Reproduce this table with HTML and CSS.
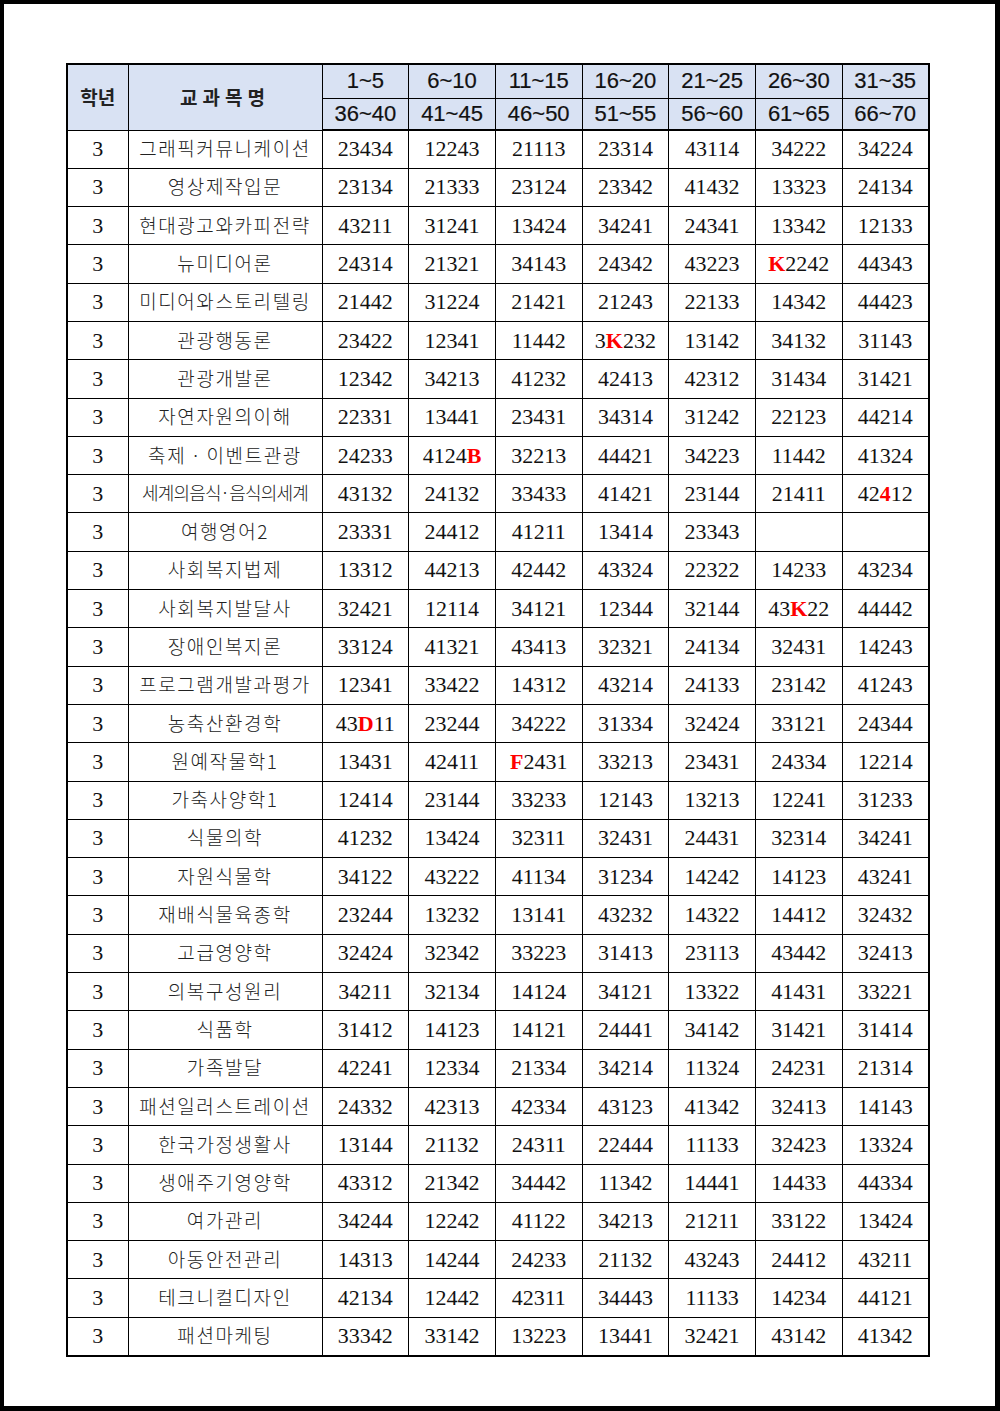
FILE: index.html
```html
<!DOCTYPE html>
<html lang="ko">
<head>
<meta charset="utf-8">
<title>교과목 답안표</title>
<link rel="stylesheet" href="styles.css">
</head>
<body>
<div class="frame">
<table class="sheet">
<colgroup>
<col class="c-grade"><col class="c-name">
<col class="c-num"><col class="c-num"><col class="c-num"><col class="c-num"><col class="c-num"><col class="c-num"><col class="c-num">
</colgroup>
<thead>
<tr class="h1">
<th rowspan="2" class="hk">학년</th>
<th rowspan="2" class="hk wide">교과목명</th>
<th>1~5</th><th>6~10</th><th>11~15</th><th>16~20</th><th>21~25</th><th>26~30</th><th>31~35</th>
</tr>
<tr class="h2">
<th>36~40</th><th>41~45</th><th>46~50</th><th>51~55</th><th>56~60</th><th>61~65</th><th>66~70</th>
</tr>
</thead>
<tbody>
<tr><td>3</td><td class="nm">그래픽커뮤니케이션</td><td>23434</td><td>12243</td><td>21113</td><td>23314</td><td>43114</td><td>34222</td><td>34224</td></tr>
<tr><td>3</td><td class="nm">영상제작입문</td><td>23134</td><td>21333</td><td>23124</td><td>23342</td><td>41432</td><td>13323</td><td>24134</td></tr>
<tr><td>3</td><td class="nm">현대광고와카피전략</td><td>43211</td><td>31241</td><td>13424</td><td>34241</td><td>24341</td><td>13342</td><td>12133</td></tr>
<tr><td>3</td><td class="nm">뉴미디어론</td><td>24314</td><td>21321</td><td>34143</td><td>24342</td><td>43223</td><td><b class="r">K</b>2242</td><td>44343</td></tr>
<tr><td>3</td><td class="nm">미디어와스토리텔링</td><td>21442</td><td>31224</td><td>21421</td><td>21243</td><td>22133</td><td>14342</td><td>44423</td></tr>
<tr><td>3</td><td class="nm">관광행동론</td><td>23422</td><td>12341</td><td>11442</td><td>3<b class="r">K</b>232</td><td>13142</td><td>34132</td><td>31143</td></tr>
<tr><td>3</td><td class="nm">관광개발론</td><td>12342</td><td>34213</td><td>41232</td><td>42413</td><td>42312</td><td>31434</td><td>31421</td></tr>
<tr><td>3</td><td class="nm">자연자원의이해</td><td>22331</td><td>13441</td><td>23431</td><td>34314</td><td>31242</td><td>22123</td><td>44214</td></tr>
<tr><td>3</td><td class="nm">축제 · 이벤트관광</td><td>24233</td><td>4124<b class="r">B</b></td><td>32213</td><td>44421</td><td>34223</td><td>11442</td><td>41324</td></tr>
<tr><td>3</td><td class="nm tight">세계의음식<span class="dot">·</span>음식의세계</td><td>43132</td><td>24132</td><td>33433</td><td>41421</td><td>23144</td><td>21411</td><td>42<b class="r">4</b>12</td></tr>
<tr><td>3</td><td class="nm">여행영어2</td><td>23331</td><td>24412</td><td>41211</td><td>13414</td><td>23343</td><td></td><td></td></tr>
<tr><td>3</td><td class="nm">사회복지법제</td><td>13312</td><td>44213</td><td>42442</td><td>43324</td><td>22322</td><td>14233</td><td>43234</td></tr>
<tr><td>3</td><td class="nm">사회복지발달사</td><td>32421</td><td>12114</td><td>34121</td><td>12344</td><td>32144</td><td>43<b class="r">K</b>22</td><td>44442</td></tr>
<tr><td>3</td><td class="nm">장애인복지론</td><td>33124</td><td>41321</td><td>43413</td><td>32321</td><td>24134</td><td>32431</td><td>14243</td></tr>
<tr><td>3</td><td class="nm">프로그램개발과평가</td><td>12341</td><td>33422</td><td>14312</td><td>43214</td><td>24133</td><td>23142</td><td>41243</td></tr>
<tr><td>3</td><td class="nm">농축산환경학</td><td>43<b class="r">D</b>11</td><td>23244</td><td>34222</td><td>31334</td><td>32424</td><td>33121</td><td>24344</td></tr>
<tr><td>3</td><td class="nm">원예작물학1</td><td>13431</td><td>42411</td><td><b class="r">F</b>2431</td><td>33213</td><td>23431</td><td>24334</td><td>12214</td></tr>
<tr><td>3</td><td class="nm">가축사양학1</td><td>12414</td><td>23144</td><td>33233</td><td>12143</td><td>13213</td><td>12241</td><td>31233</td></tr>
<tr><td>3</td><td class="nm">식물의학</td><td>41232</td><td>13424</td><td>32311</td><td>32431</td><td>24431</td><td>32314</td><td>34241</td></tr>
<tr><td>3</td><td class="nm">자원식물학</td><td>34122</td><td>43222</td><td>41134</td><td>31234</td><td>14242</td><td>14123</td><td>43241</td></tr>
<tr><td>3</td><td class="nm">재배식물육종학</td><td>23244</td><td>13232</td><td>13141</td><td>43232</td><td>14322</td><td>14412</td><td>32432</td></tr>
<tr><td>3</td><td class="nm">고급영양학</td><td>32424</td><td>32342</td><td>33223</td><td>31413</td><td>23113</td><td>43442</td><td>32413</td></tr>
<tr><td>3</td><td class="nm">의복구성원리</td><td>34211</td><td>32134</td><td>14124</td><td>34121</td><td>13322</td><td>41431</td><td>33221</td></tr>
<tr><td>3</td><td class="nm">식품학</td><td>31412</td><td>14123</td><td>14121</td><td>24441</td><td>34142</td><td>31421</td><td>31414</td></tr>
<tr><td>3</td><td class="nm">가족발달</td><td>42241</td><td>12334</td><td>21334</td><td>34214</td><td>11324</td><td>24231</td><td>21314</td></tr>
<tr><td>3</td><td class="nm">패션일러스트레이션</td><td>24332</td><td>42313</td><td>42334</td><td>43123</td><td>41342</td><td>32413</td><td>14143</td></tr>
<tr><td>3</td><td class="nm">한국가정생활사</td><td>13144</td><td>21132</td><td>24311</td><td>22444</td><td>11133</td><td>32423</td><td>13324</td></tr>
<tr><td>3</td><td class="nm">생애주기영양학</td><td>43312</td><td>21342</td><td>34442</td><td>11342</td><td>14441</td><td>14433</td><td>44334</td></tr>
<tr><td>3</td><td class="nm">여가관리</td><td>34244</td><td>12242</td><td>41122</td><td>34213</td><td>21211</td><td>33122</td><td>13424</td></tr>
<tr><td>3</td><td class="nm">아동안전관리</td><td>14313</td><td>14244</td><td>24233</td><td>21132</td><td>43243</td><td>24412</td><td>43211</td></tr>
<tr><td>3</td><td class="nm">테크니컬디자인</td><td>42134</td><td>12442</td><td>42311</td><td>34443</td><td>11133</td><td>14234</td><td>44121</td></tr>
<tr><td>3</td><td class="nm">패션마케팅</td><td>33342</td><td>33142</td><td>13223</td><td>13441</td><td>32421</td><td>43142</td><td>41342</td></tr>
</tbody>
</table>
</div>
</body>
</html>
```
FILE: styles.css
```css
html, body {
  margin: 0;
  padding: 0;
  background: #ffffff;
}
.frame {
  box-sizing: border-box;
  width: 1000px;
  height: 1411px;
  border-style: solid;
  border-color: #000;
  border-width: 4px 5px 5px 4px;
  padding: 59px 0 0 62px;
  background: #fff;
}
.sheet {
  border-collapse: collapse;
  table-layout: fixed;
  width: 862px;
  border: 2px solid #000;
  color: #111;
}
.c-grade { width: 61px; }
.c-name { width: 194px; }
.c-num { width: 86.7px; }
.sheet th, .sheet td {
  border: 1px solid #000;
  padding: 0;
  text-align: center;
  vertical-align: middle;
  white-space: nowrap;
  overflow: hidden;
}
.sheet thead th {
  background: #d9e2f3;
  font-family: "Liberation Sans", Arial, sans-serif;
  font-weight: normal;
  font-size: 22px;
  color: #111;
  -webkit-text-stroke: 0.2px #111;
}
.sheet thead tr.h1 { height: 34px; }
.sheet thead tr.h2 { height: 32px; }
.sheet thead tr.h2 th { border-bottom: 2px solid #000; }
.sheet th.hk {
  font-family: "Noto Sans CJK KR", "Noto Sans", sans-serif;
  font-weight: 700;
  font-size: 19px;
  -webkit-text-stroke: 0;
  color: #222;
  padding-bottom: 2px;
}
.sheet th.wide { letter-spacing: 5px; }
.sheet tbody tr { height: 38.3px; }
.sheet tbody td {
  font-family: "Liberation Serif", "Times New Roman", serif;
  font-size: 22px;
  color: #111;
}
.sheet td.nm {
  font-family: "Noto Sans CJK KR", "Noto Sans", sans-serif;
  font-size: 19px;
  font-weight: 300;
  letter-spacing: 1.6px;
  color: #222;
  padding-bottom: 3px;
}
.sheet td.tight {
  font-size: 18px;
  letter-spacing: -0.8px;
}
.dot {
  display: inline-block;
  margin: 0 2px;
  letter-spacing: 0;
}
.r {
  color: #ff0000;
  font-weight: 700;
}
```
